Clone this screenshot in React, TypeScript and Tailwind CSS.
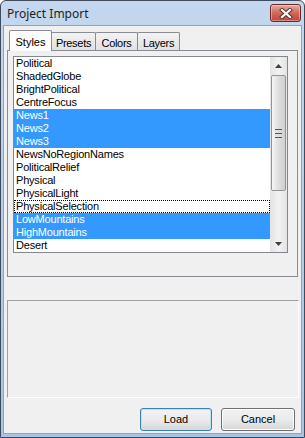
import React from "react";

const styles = [
  "Political",
  "ShadedGlobe",
  "BrightPolitical",
  "CentreFocus",
  "News1",
  "News2",
  "News3",
  "NewsNoRegionNames",
  "PoliticalRelief",
  "Physical",
  "PhysicalLight",
  "PhysicalSelection",
  "LowMountains",
  "HighMountains",
  "Desert",
];

const selected = ["News1", "News2", "News3", "LowMountains", "HighMountains"];
const focused = "PhysicalSelection";

function CloseButton() {
  return (
    <div className="w-[31px] h-[18px] rounded-[3px] border border-[#6b2a25] bg-gradient-to-b from-[#e8a99c] via-[#d0695a] to-[#c2433a] flex items-center justify-center shadow-[inset_0_0_0_1px_rgba(255,255,255,0.35)]">
      <svg width="14" height="11" viewBox="0 0 14 11">
        <path d="M3 2 L11 9 M11 2 L3 9" stroke="#5a3030" strokeWidth="4" strokeLinecap="square" />
        <path d="M3 2 L11 9 M11 2 L3 9" stroke="#ffffff" strokeWidth="2.2" strokeLinecap="square" />
      </svg>
    </div>
  );
}

function Arrow({ up }: { up?: boolean }) {
  return (
    <svg width="7" height="4" viewBox="0 0 7 4">
      <path d={up ? "M0 4 L3.5 0 L7 4 Z" : "M0 0 L7 0 L3.5 4 Z"} fill="#404040" />
    </svg>
  );
}

function ScrollBar() {
  return (
    <div className="w-[17px] h-full flex flex-col bg-gradient-to-r from-[#e3e3e3] via-[#f2f2f2] to-[#e3e3e3]">
      <div className="h-[17px] flex items-center justify-center">
        <Arrow up />
      </div>
      <div className="flex-1 flex flex-col pt-[1px]">
        <div className="mx-[1px] h-[116px] rounded-[2px] border border-[#959595] bg-gradient-to-r from-[#f6f6f6] via-[#dedede] to-[#cfcfcf] flex items-center justify-center">
          <div className="flex flex-col gap-[1px]">
            <div className="w-[7px] h-[1px] bg-[#555]" />
            <div className="w-[7px] h-[1px] bg-[#ddd]" />
            <div className="w-[7px] h-[1px] bg-[#555]" />
            <div className="w-[7px] h-[1px] bg-[#ddd]" />
            <div className="w-[7px] h-[1px] bg-[#555]" />
          </div>
        </div>
      </div>
      <div className="h-[17px] flex items-center justify-center">
        <Arrow />
      </div>
    </div>
  );
}

function Tab({ label, active, w }: { label: string; active?: boolean; w: string }) {
  if (active) {
    return (
      <div className={"relative z-10 -mb-px h-[21px] border border-b-0 border-[#898c95] bg-[#fcfcfc] flex items-start justify-center pt-[3px] rounded-t-[2px] " + w}>
        {label}
      </div>
    );
  }
  return (
    <div className={"-ml-px h-[18px] border border-b-0 border-[#898c95] bg-gradient-to-b from-[#f3f3f3] to-[#e1e1e1] flex items-start justify-center pt-[2px] rounded-t-[2px] tracking-[-0.3px] " + w}>
      {label}
    </div>
  );
}

export default function App() {
  return (
    <div
      className="w-[305px] h-[438px] flex flex-col border border-[#3f4b5c] rounded-t-[6px] bg-gradient-to-b from-[#c4d7ef] to-[#a8c4e7] text-[11px] text-black"
      style={{ fontFamily: '"Liberation Sans", Arial, sans-serif' }}
    >
      {/* title bar */}
      <div className="h-[24px] flex items-start justify-between pl-[6px] pr-[3px] pt-[3px]">
        <div className="text-[12px] text-[#1e1e1e] pt-[1px]" style={{ fontFamily: '"Noto Sans", "Open Sans", sans-serif' }}>
          Project Import
        </div>
        <CloseButton />
      </div>

      {/* client area */}
      <div className="flex-1 mx-[2px] mb-[3px] border border-[#8ba4c6] bg-[#f0f0f0] flex flex-col pl-[3px] pr-[3px] pt-[4px]">
        <div className="h-[20px] flex items-end pl-[2px]">
          <Tab label="Styles" active w="w-[43px]" />
          <Tab label="Presets" w="w-[45px]" />
          <Tab label="Colors" w="w-[43px]" />
          <Tab label="Layers" w="w-[43px]" />
        </div>
        <div className="w-[291px] h-[227px] border border-[#898c95] bg-[#f0f0f0] pt-[5px] pl-[5px]">
          <div className="w-[275px] h-[197px] border border-[#828790] bg-white flex">
            <div className="flex-1 overflow-hidden tracking-[-0.2px]">
              {styles.map((s) => {
                const sel = selected.includes(s);
                const foc = s === focused;
                return (
                  <div
                    key={s}
                    className={
                      "h-[13px] leading-[13px] pl-[2px] whitespace-nowrap " +
                      (sel ? "bg-[#3399ff] text-white " : "") +
                      (foc ? "outline outline-1 outline-dotted outline-black -outline-offset-1" : "")
                    }
                  >
                    {s}
                  </div>
                );
              })}
            </div>
            <ScrollBar />
          </div>
        </div>

        <div className="mt-[23px] w-[292px] h-[98px] border border-[#a0a0a0] border-r-white border-b-white" />

        <div className="mt-[10px] flex justify-end gap-[9px] pr-[3px]">
          <div className="w-[72px] h-[23px] rounded-[3px] border border-[#3c7fb1] bg-gradient-to-b from-[#f2f2f2] via-[#ebebeb] to-[#d6d6d6] flex items-center justify-center shadow-[inset_0_0_0_1px_#b7e4f7]">
            Load
          </div>
          <div className="w-[74px] h-[23px] rounded-[3px] border border-[#707070] bg-gradient-to-b from-[#f2f2f2] via-[#ebebeb] to-[#d6d6d6] flex items-center justify-center shadow-[inset_0_0_0_1px_#fcfcfc]">
            Cancel
          </div>
        </div>
      </div>
    </div>
  );
}
